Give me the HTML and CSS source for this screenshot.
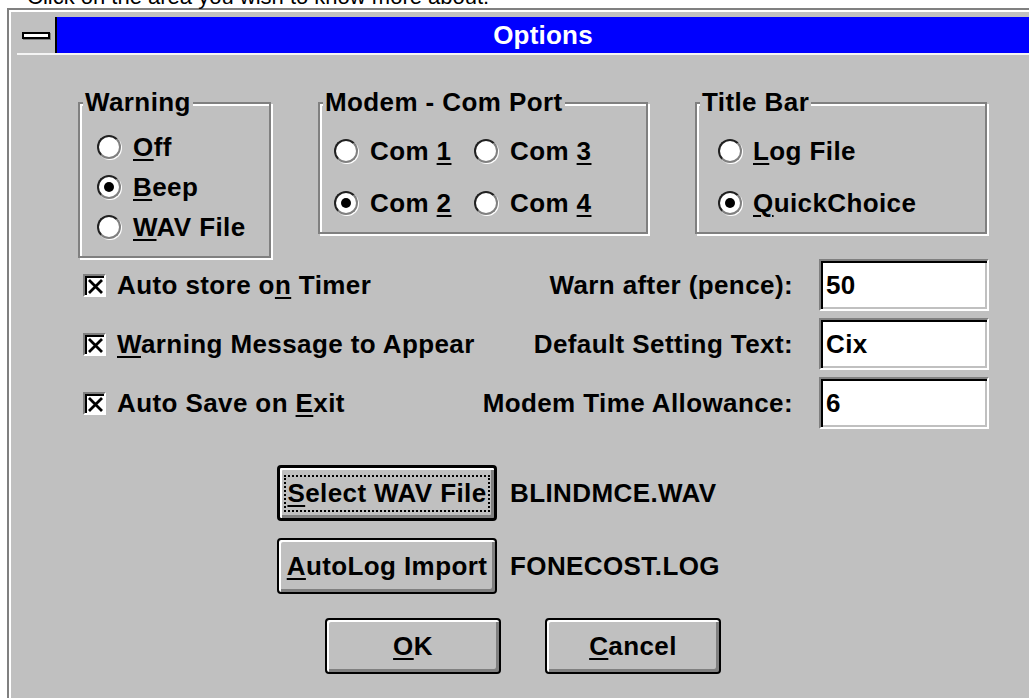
FILE: index.html
```html
<!DOCTYPE html>
<html lang="en">
<head>
<meta charset="utf-8">
<title>Options</title>
<link rel="stylesheet" href="styles.css">
</head>
<body>
<p class="hint">Click on the area you wish to know more about:</p>

<div class="window">
  <div class="titlebar">
    <div class="sysmenu"><span class="sysbar"></span></div>
    <div class="caption">Options</div>
  </div>

  <div class="client">
    <!-- option groups -->
    <div class="groups">
      <div class="group g-warning">
        <span class="group-title">Warning</span>
        <div class="opt"><span class="radio"></span><span><u>O</u>ff</span></div>
        <div class="opt"><span class="radio on"></span><span><u>B</u>eep</span></div>
        <div class="opt"><span class="radio"></span><span><u>W</u>AV File</span></div>
      </div>

      <div class="group g-modem">
        <span class="group-title">Modem - Com Port</span>
        <div class="opt"><span class="radio"></span><span>Com <u>1</u></span></div>
        <div class="opt"><span class="radio"></span><span>Com <u>3</u></span></div>
        <div class="opt"><span class="radio on"></span><span>Com <u>2</u></span></div>
        <div class="opt"><span class="radio"></span><span>Com <u>4</u></span></div>
      </div>

      <div class="group g-title">
        <span class="group-title">Title Bar</span>
        <div class="opt"><span class="radio"></span><span><u>L</u>og File</span></div>
        <div class="opt"><span class="radio on"></span><span><u>Q</u>uickChoice</span></div>
      </div>
    </div>

    <!-- checkboxes and edit fields -->
    <div class="settings">
      <div class="checks">
        <div class="check">
          <span class="checkbox"><svg viewBox="0 0 19 19" width="19" height="19"><path d="M4 4L17 17M17 4L4 17" stroke="#000" stroke-width="2.8"/></svg></span>
          <span>Auto store o<u>n</u> Timer</span>
        </div>
        <div class="check">
          <span class="checkbox"><svg viewBox="0 0 19 19" width="19" height="19"><path d="M4 4L17 17M17 4L4 17" stroke="#000" stroke-width="2.8"/></svg></span>
          <span><u>W</u>arning Message to Appear</span>
        </div>
        <div class="check">
          <span class="checkbox"><svg viewBox="0 0 19 19" width="19" height="19"><path d="M4 4L17 17M17 4L4 17" stroke="#000" stroke-width="2.8"/></svg></span>
          <span>Auto Save on <u>E</u>xit</span>
        </div>
      </div>

      <div class="fields">
        <span class="field-label">Warn after (pence):</span>
        <div class="edit">50</div>
        <span class="field-label">Default Setting Text:</span>
        <div class="edit">Cix</div>
        <span class="field-label">Modem Time Allowance:</span>
        <div class="edit">6</div>
      </div>
    </div>

    <!-- file buttons -->
    <div class="file-row first">
      <div class="btn btn-file default"><span class="focus"><u>S</u>elect WAV File</span></div>
      <span class="file-name">BLINDMCE.WAV</span>
    </div>
    <div class="file-row">
      <div class="btn btn-file"><span><u>A</u>utoLog Import</span></div>
      <span class="file-name">FONECOST.LOG</span>
    </div>

    <!-- dialog buttons -->
    <div class="actions">
      <div class="btn btn-action"><span><u>O</u>K</span></div>
      <div class="btn btn-action"><span><u>C</u>ancel</span></div>
    </div>
  </div>
</div>
</body>
</html>
```

FILE: styles.css
```css
html, body {
  margin: 0;
  padding: 0;
  background: #fff;
  overflow: hidden;
  height: 100%;
}

.hint {
  margin: -14px 0 0 27px;
  font-family: "Liberation Sans", Arial, sans-serif;
  font-size: 22px;
  line-height: 22px;
  color: #000;
  white-space: nowrap;
}

/* dialog frame */
.window {
  box-sizing: border-box;
  margin-left: 7px;
  width: 1022px;
  height: 720px;
  background: #c0c0c0;
  border-top: 2px solid #808080;
  border-left: 2px solid #808080;
  box-shadow: inset 2px 2px 0 #fff;
  padding: 7px 0 0 8px;
  font-family: "Liberation Sans", Arial, sans-serif;
  font-weight: bold;
  font-size: 26px;
  letter-spacing: 0.4px;
  color: #000;
}

u {
  text-decoration: underline;
  text-decoration-thickness: 2px;
  text-underline-offset: 3px;
}

.titlebar {
  display: flex;
  height: 36px;
  border-bottom: 2px solid #f4f4f4;
}

.sysmenu {
  box-sizing: border-box;
  width: 40px;
  flex: none;
  background: #c0c0c0;
  border-right: 2px solid #000;
  display: flex;
  align-items: center;
  padding-left: 5px;
}

.sysbar {
  box-sizing: border-box;
  width: 28px;
  height: 7px;
  background: #fff;
  border: 2px solid #000;
  box-shadow: 1px 1px 0 #808080;
}

.caption {
  flex: 1;
  background: #0000ff;
  color: #fff;
  text-align: center;
  line-height: 36px;
  letter-spacing: 0.2px;
}

/* client area */
.client {
  padding-left: 61px;
}

.groups {
  display: flex;
  align-items: flex-start;
  gap: 47px;
  margin-top: 47px;
}

.group {
  position: relative;
  box-sizing: border-box;
  border: 2px solid #808080;
  box-shadow: inset 2px 2px 0 #fff, 2px 2px 0 #fff;
}

.group-title {
  position: absolute;
  top: -17px;
  left: 3px;
  padding: 0 2px;
  line-height: 30px;
  background: #c0c0c0;
  white-space: nowrap;
}

.opt {
  display: flex;
  align-items: center;
  gap: 12px;
  height: 40px;
  white-space: nowrap;
}

.g-warning {
  width: 193px;
  height: 156px;
  padding: 23px 0 0 17px;
}

.g-modem {
  width: 330px;
  height: 132px;
  padding: 27px 0 0 14px;
  display: grid;
  grid-template-columns: 140px auto;
  grid-auto-rows: 40px;
  row-gap: 12px;
}

.g-title {
  width: 292px;
  height: 132px;
  padding: 27px 0 0 21px;
  display: grid;
  grid-auto-rows: 40px;
  row-gap: 12px;
}

.g-title .opt {
  gap: 11px;
}

.radio {
  position: relative;
  flex: none;
  box-sizing: border-box;
  width: 24px;
  height: 24px;
  border-radius: 50%;
  background: #fff;
  border: 2px solid;
  border-color: #202020 #808080 #808080 #202020;
  box-shadow: 1px 1px 0 #fff;
}

.radio.on::after {
  content: "";
  position: absolute;
  inset: 5px;
  border-radius: 50%;
  background: #000;
}

/* checkboxes and edit fields */
.settings {
  display: flex;
  justify-content: space-between;
  width: 911px;
  margin-top: 1px;
}

.checks {
  display: flex;
  flex-direction: column;
  gap: 7px;
  padding-left: 5px;
}

.check {
  display: flex;
  align-items: center;
  gap: 11px;
  height: 52px;
  white-space: nowrap;
}

.checkbox {
  flex: none;
  box-sizing: border-box;
  width: 23px;
  height: 23px;
  background: #fff;
  border: 2px solid;
  border-color: #808080 #fff #fff #808080;
  box-shadow: inset 2px 2px 0 #000;
  display: flex;
}

.checkbox svg {
  display: block;
}

.fields {
  display: grid;
  grid-template-columns: auto 170px;
  grid-auto-rows: 52px;
  column-gap: 26px;
  row-gap: 7px;
  align-items: center;
}

.field-label {
  justify-self: end;
  white-space: nowrap;
}

.edit {
  box-sizing: border-box;
  height: 52px;
  background: #fff;
  border: 2px solid;
  border-color: #808080 #fff #fff #808080;
  box-shadow: inset 2px 2px 0 #000, inset -2px -2px 0 #c0c0c0;
  padding-left: 5px;
  display: flex;
  align-items: center;
}

/* buttons */
.btn {
  box-sizing: border-box;
  background: #c0c0c0;
  border: 2px solid #000;
  border-radius: 4px;
  box-shadow: inset 2px 2px 0 #fff, inset -3px -3px 0 #808080;
  display: flex;
  align-items: center;
  justify-content: center;
  white-space: nowrap;
}

.btn.default {
  border-width: 3px;
}

.focus {
  border: 2px dotted #000;
  padding: 0 1px;
  line-height: 33px;
}

.file-row {
  display: flex;
  align-items: center;
  gap: 13px;
  margin-left: 199px;
  margin-top: 17px;
}

.file-row.first {
  margin-top: 36px;
}

.btn-file {
  width: 220px;
  height: 56px;
}

.file-name {
  white-space: nowrap;
}

.actions {
  display: flex;
  gap: 44px;
  margin-left: 247px;
  margin-top: 24px;
}

.btn-action {
  width: 176px;
  height: 56px;
}
```
